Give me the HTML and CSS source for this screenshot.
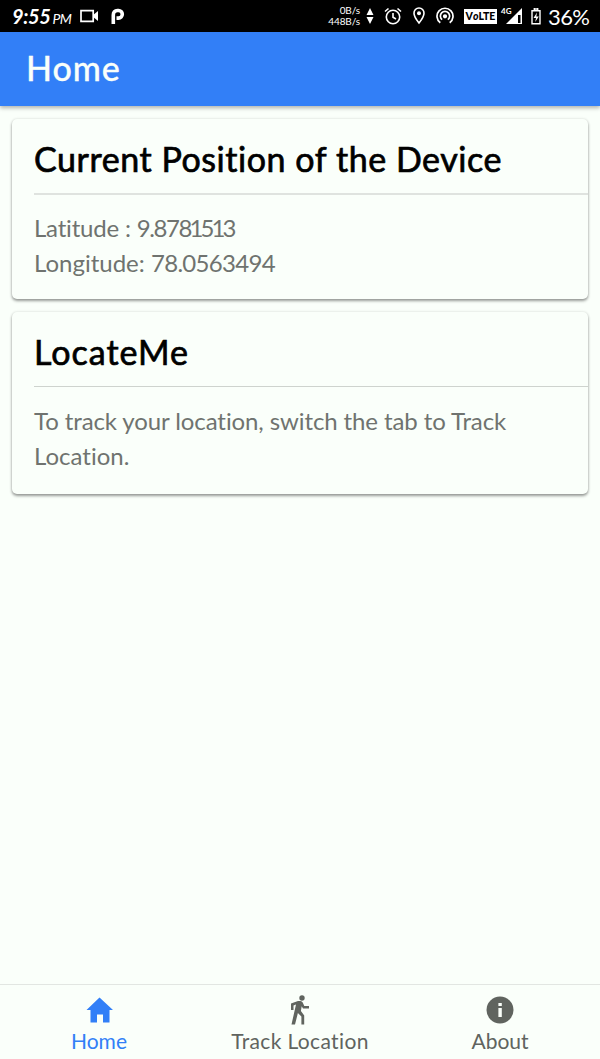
FILE: index.html
```html
<!DOCTYPE html>
<html lang="en">
<head>
<meta charset="utf-8">
<title>Home</title>
<link rel="stylesheet" href="styles.css">
</head>
<body>
<div class="screen">
  <div class="status">
    <span class="clock">9:55 <small>PM</small></span>
    <svg class="ic-video" width="19" height="14" viewBox="0 0 19 14"><path d="M1 1.700h12.200v10.600H1z" fill="none" stroke="#fff" stroke-width="1.700"/><path d="M13.500 5.800 18 2v10l-4.500-3.800z" fill="#fff"/></svg>
    <svg class="ic-p" width="14" height="17" viewBox="0 0 14 17"><path d="M2.300 16V7Q2.300 2.500 6.500 2.500H7.500a3.800 3.800 0 0 1 0 7.600H5.500" fill="none" stroke="#fff" stroke-width="3.600"/></svg>
    <div class="net"><span>0B/s</span><span>448B/s</span></div>
    <svg class="ic-arrows" width="8" height="18" viewBox="0 0 8 18"><path d="M4 1 7.500 8h-7zM4 17 .5 10h7z" fill="#fff"/></svg>
    <svg class="ic-alarm" width="18" height="18" viewBox="0 0 18 18" fill="none" stroke="#fff" stroke-width="1.600"><circle cx="9" cy="10" r="6.700"/><path d="M9 6v4.300l3 1.700M1 4.500 4.500 1.500M17 4.500 13.500 1.500"/></svg>
    <svg class="ic-pin" width="14" height="18" viewBox="0 0 14 18"><path d="M7 1a5 5 0 0 0-5 5.200C2 9.700 7 16 7 16s5-6.300 5-9.800A5 5 0 0 0 7 1z" fill="none" stroke="#fff" stroke-width="1.600"/><circle cx="7" cy="6.300" r="2" fill="#fff"/></svg>
    <svg class="ic-cast" width="18" height="18" viewBox="0 0 18 18" fill="none" stroke="#fff" stroke-width="1.700"><path d="M4.300 15.700a8 8 0 1 1 9.400 0M6.200 12.700a4.600 4.600 0 1 1 5.600 0"/><circle cx="9" cy="9.300" r="1.300" fill="#fff"/></svg>
    <span class="volte">V<i>o</i>LTE</span>
    <div class="signal"><span>4G</span><svg width="18" height="17" viewBox="0 0 18 17"><path d="M17 0v16H1z" fill="#fff"/><path d="M13 7h2.500v8H13z" fill="#000"/></svg></div>
    <svg class="ic-batt" width="10" height="17" viewBox="0 0 10 17"><path d="M3.300 0h3.400v2H3.300zM1 2.700h8v13H1z" fill="none" stroke="#fff" stroke-width="1.400"/><path d="M6 4.500 2.500 10H5l-.8 4L7.800 8.500H5.300z" fill="#fff"/></svg>
    <span class="pct">36%</span>
  </div>
  <header class="toolbar"><h1>Home</h1></header>
  <main class="content">
    <section class="card position">
      <h2>Current Position of the Device</h2>
      <div class="body"><p class="lat">Latitude : <span class="num">9.878<b>1</b>5<b>1</b>3</span></p><p class="lon">Longitude: <span class="num">78.0563494</span></p></div>
    </section>
    <section class="card locate">
      <h2>LocateMe</h2>
      <div class="body"><p class="track">To track your location, switch the tab to Track</p><p class="loc">Location.</p></div>
    </section>
  </main>
  <nav class="tabs">
    <a class="tab active"><svg width="30" height="30" viewBox="0 0 30 30"><path d="M15.500 2.500 29 15H25.500V27.500h-6.500v-8h-6v8H6.500V15H2.500z" fill="currentColor"/></svg><span class="t-home">Home</span></a>
    <a class="tab"><svg width="30" height="30" viewBox="0 0 30 30"><circle cx="17" cy="3" r="2.700" fill="currentColor"/><path d="M6 8.500 13 6h2.500q1.500 0 2.200 1.500l1.600 3.500H24v2.500h-6l-1.300-2.200-.8 4.700 3.300 4.500V29.500h-2.800V21.500l-3.500-3.500-2.900 11.500H6.500L11 9.500l-2.500 1V15H6z" fill="currentColor"/></svg><span class="t-track">Track Location</span></a>
    <a class="tab"><svg width="30" height="30" viewBox="0 0 30 30"><circle cx="15" cy="15" r="13.500" fill="currentColor"/><path d="M13.400 8h3.400v3h-3.400zM13.400 13h3.400v9h-3.400z" fill="#fafffa"/></svg><span class="t-about">About</span></a>
  </nav>
</div>
</body>
</html>
```
FILE: styles.css
```css
* { box-sizing: border-box; margin: 0; padding: 0; }
body { background: #fafffa; font-family: Lato, "Liberation Sans", sans-serif; font-variant-ligatures: none; }
.screen { width: 600px; height: 1059px; display: flex; flex-direction: column; overflow: hidden; }
svg { display: block; flex: none; }
.status { height: 32px; background: #000; color: #fff; display: flex; align-items: center; padding-left: 12px; white-space: nowrap; flex: none; }
.clock { width: 68px; font-size: 20px; font-style: italic; font-weight: 700; letter-spacing: -0.4px; }
.clock small { font-size: 14px; font-weight: 400; margin-left: -2px; }
.ic-p { margin-left: 12px; }
.net { width: 48px; margin-left: 187px; font-size: 10px; line-height: 11.500px; text-align: right; display: flex; flex-direction: column; letter-spacing: -0.1px; flex: none; }
.ic-arrows { margin-left: 6px; }
.ic-alarm { margin-left: 10px; }
.ic-pin { margin-left: 10px; }
.ic-cast { margin-left: 10px; }
.volte { width: 33px; height: 15px; margin-left: 10px; background: #fff; color: #000; font-size: 10.500px; line-height: 15px; font-weight: 900; text-align: center; flex: none; }
.signal { display: flex; align-items: center; margin-left: 4px; }
.signal span { font-size: 8px; font-weight: 700; width: 11px; height: 19px; line-height: 8px; margin-right: -7px; }
.ic-batt { margin-left: 8px; }
.pct { margin-left: 7px; font-size: 22px; letter-spacing: -0.6px; }
.toolbar { height: 74px; flex: none; background: #327ff7; color: #fafffa; padding-left: 26px; box-shadow: 0 2px 4px rgba(0,0,0,.3); }
.toolbar h1 { font-size: 34px; line-height: 71px; font-weight: 500; letter-spacing: .9px; -webkit-text-stroke: .3px; }
.content { flex: 1; padding: 13px 12px; display: flex; flex-direction: column; gap: 13px; }
.card { border-radius: 5px; background: #fafffa; box-shadow: 0 2px 3px rgba(0,0,0,.38), 0 0 3px rgba(0,0,0,.12); padding-left: 22px; white-space: nowrap; }
.position { height: 180px; }
.locate { height: 182px; }
.card h2 { height: 76px; font-size: 34px; line-height: 80px; font-weight: 400; color: #000; letter-spacing: .55px; -webkit-text-stroke: .7px #000; border-bottom: 2px solid #dfe3df; }
.locate h2 { height: 75px; letter-spacing: 1px; border-bottom: 1px solid #ced3ce; }
.body { padding-top: 15px; font-size: 24px; line-height: 35px; color: #6f736f; }
.locate .body { padding-top: 16px; }
.lat { letter-spacing: -0.2px; }
.lat .num { letter-spacing: -1.400px; }
.num b { font-weight: 400; margin: 0 -1.500px; }
.lon .num { letter-spacing: -0.7px; }
.track { letter-spacing: -0.1px; }
.tabs { height: 75px; flex: none; display: grid; grid-template-columns: repeat(3, 1fr); border-top: 1px solid #e2e6e2; }
.tab { display: flex; flex-direction: column; align-items: center; padding-top: 10px; color: #60645f; font-size: 21px; line-height: 32px; white-space: nowrap; }
.active { color: #327ff7; }
.tab:first-child { padding-right: 2px; }
.t-track { letter-spacing: .35px; }
```
